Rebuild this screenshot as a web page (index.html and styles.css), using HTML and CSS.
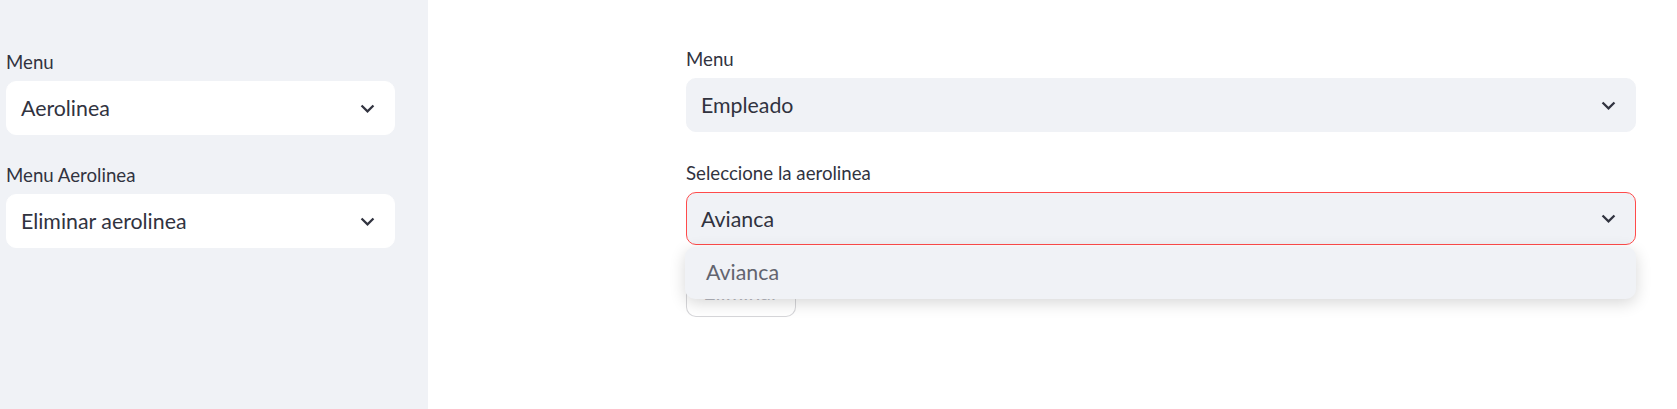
FILE: index.html
```html
<!DOCTYPE html>
<html lang="es">
<head>
<meta charset="utf-8">
<title>App</title>
<link rel="stylesheet" href="styles.css">
</head>
<body>
<div class="app">
  <aside class="sidebar">
    <div class="field">
      <div class="label">Menu</div>
      <div class="select select-white">
        <span class="value">Aerolinea</span>
        <svg class="chev" viewBox="0 0 24 24"><path d="M7.41 8.59L12 13.17l4.59-4.58L18 10l-6 6-6-6 1.41-1.41z"/></svg>
      </div>
    </div>
    <div class="field">
      <div class="label">Menu Aerolinea</div>
      <div class="select select-white">
        <span class="value">Eliminar aerolinea</span>
        <svg class="chev" viewBox="0 0 24 24"><path d="M7.41 8.59L12 13.17l4.59-4.58L18 10l-6 6-6-6 1.41-1.41z"/></svg>
      </div>
    </div>
  </aside>
  <main class="main">
    <div class="content">
      <div class="field">
        <div class="label">Menu</div>
        <div class="select">
          <span class="value">Empleado</span>
          <svg class="chev" viewBox="0 0 24 24"><path d="M7.41 8.59L12 13.17l4.59-4.58L18 10l-6 6-6-6 1.41-1.41z"/></svg>
        </div>
      </div>
      <div class="field">
        <div class="label">Seleccione la aerolinea</div>
        <div class="select-wrap">
          <div class="select select-focus">
            <span class="value">Avianca</span>
            <svg class="chev" viewBox="0 0 24 24"><path d="M7.41 8.59L12 13.17l4.59-4.58L18 10l-6 6-6-6 1.41-1.41z"/></svg>
          </div>
          <div class="dropdown">
            <div class="option">Avianca</div>
          </div>
        </div>
      </div>
      <div class="btn-row">
        <button class="btn">Eliminar</button>
      </div>
    </div>
  </main>
</div>
</body>
</html>
```
FILE: styles.css
```css
* { box-sizing: border-box; }
html, body {
  margin: 0;
  padding: 0;
  background: #ffffff;
  font-family: "Lato", "Noto Sans", sans-serif;
  color: #31333f;
}
.app {
  display: flex;
  width: 1677px;
  height: 409px;
  overflow: hidden;
}
.sidebar {
  width: 428px;
  flex: none;
  background: #f0f2f6;
  padding: 45px 0 0 6px;
  display: flex;
  flex-direction: column;
  gap: 23px;
}
.sidebar .field { width: 389px; }
.main {
  flex: 1;
  padding: 42px 0 0 258px;
}
.content {
  width: 950px;
  display: flex;
  flex-direction: column;
  gap: 24px;
}
.field {
  display: flex;
  flex-direction: column;
}
.label {
  font-size: 18.67px;
  line-height: 30px;
  height: 32px;
  padding-top: 2px;
  margin-bottom: 4px;
}
.select {
  height: 54px;
  border-radius: 10px;
  background: #f0f2f6;
  border: 1px solid #f0f2f6;
  display: flex;
  align-items: center;
  justify-content: space-between;
  padding: 0 13px 0 14px;
  font-size: 21.33px;
}
.select-white {
  background: #ffffff;
  border-color: #ffffff;
}
.select-focus {
  height: 53px;
  border-color: #ff4b4b;
}
.chev {
  width: 27px;
  height: 27px;
  fill: #31333f;
}
.select-wrap {
  position: relative;
}
.dropdown {
  position: absolute;
  left: -1px;
  right: 0;
  top: 55px;
  height: 52px;
  background: #f0f2f6;
  border-radius: 10px;
  box-shadow: 0 4px 16px rgba(0, 0, 0, 0.16);
  z-index: 5;
  display: flex;
  align-items: center;
  padding-left: 21px;
}
.option {
  font-size: 21.33px;
  color: #62646f;
  margin-top: -2px;
}
.btn-row {
  display: flex;
  margin-top: -3px;
}
.btn {
  width: 110px;
  height: 51px;
  border: 1px solid rgba(49, 51, 63, 0.2);
  border-radius: 10px;
  background: #ffffff;
  font-family: inherit;
  font-size: 21.33px;
  color: #b9bac2;
}
```
